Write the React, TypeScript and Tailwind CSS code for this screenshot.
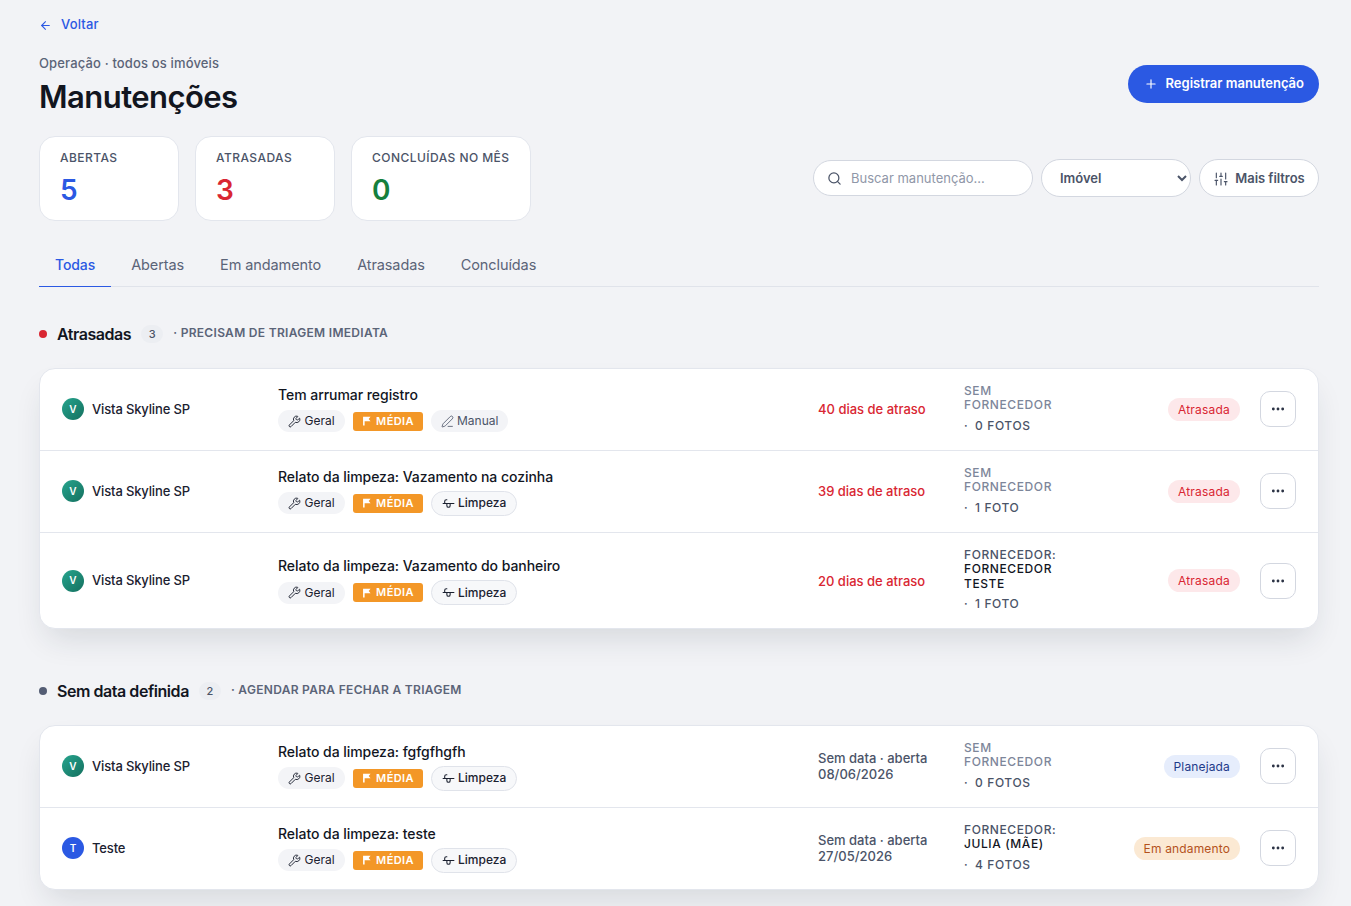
import { ArrowLeft, Ellipsis, PenLine, Plus, Search, SlidersVertical, Wrench } from 'lucide-react';

type Row = {
  initial: string;
  name: string;
  tone: 'green' | 'blue';
  title: string;
  source: 'Manual' | 'Limpeza';
  date: string[];
  late: boolean;
  supplier: string[];
  photos: string;
  status: 'Atrasada' | 'Planejada' | 'Em andamento';
};

const lateRows: Row[] = [
  { initial: 'V', name: 'Vista Skyline SP', tone: 'green', title: 'Tem arrumar registro', source: 'Manual', date: ['40 dias de atraso'], late: true, supplier: [], photos: '0 fotos', status: 'Atrasada' },
  { initial: 'V', name: 'Vista Skyline SP', tone: 'green', title: 'Relato da limpeza: Vazamento na cozinha', source: 'Limpeza', date: ['39 dias de atraso'], late: true, supplier: [], photos: '1 foto', status: 'Atrasada' },
  { initial: 'V', name: 'Vista Skyline SP', tone: 'green', title: 'Relato da limpeza: Vazamento do banheiro', source: 'Limpeza', date: ['20 dias de atraso'], late: true, supplier: ['Fornecedor', 'Teste'], photos: '1 foto', status: 'Atrasada' },
];

const noDateRows: Row[] = [
  { initial: 'V', name: 'Vista Skyline SP', tone: 'green', title: 'Relato da limpeza: fgfgfhgfh', source: 'Limpeza', date: ['Sem data · aberta', '08/06/2026'], late: false, supplier: [], photos: '0 fotos', status: 'Planejada' },
  { initial: 'T', name: 'Teste', tone: 'blue', title: 'Relato da limpeza: teste', source: 'Limpeza', date: ['Sem data · aberta', '27/05/2026'], late: false, supplier: ['Julia (mãe)'], photos: '4 fotos', status: 'Em andamento' },
];

function FlagIcon() {
  return (
    <svg width="9" height="10" viewBox="0 0 14 16" fill="currentColor">
      <path d="M1.5 1h12l-3 3.7 3 3.8H4V15H1.5z" />
    </svg>
  );
}

function CleaningIcon() {
  return (
    <svg width="13" height="13" viewBox="0 0 24 24" fill="none" stroke="currentColor" strokeWidth="2" strokeLinecap="round" strokeLinejoin="round">
      <path d="M2 12h20" />
      <path d="M9 12v4a3 3 0 0 0 6 0v-4" />
      <path d="M5 12V8a3 3 0 0 1 3-3h1" />
    </svg>
  );
}

function Stat({ label, value, color }: { label: string; value: string; color: string }) {
  return (
    <div className="h-[85px] rounded-2xl border border-[#e3e6ed] bg-white px-5 pt-[13px]">
      <p className="whitespace-nowrap text-xs font-medium uppercase leading-4 tracking-[0.45px] text-[#4b5468]">{label}</p>
      <p className={`mt-2 text-[28px] font-semibold leading-8 ${color}`}>{value}</p>
    </div>
  );
}

function StatusPill({ status }: { status: Row['status'] }) {
  if (status === 'Atrasada') {
    return <span className="rounded-full bg-[#fde8ea] px-[10px] py-[3px] text-xs leading-[17px] tracking-[0.2px] text-[#d92632]">Atrasada</span>;
  }
  if (status === 'Planejada') {
    return <span className="rounded-full bg-[#e6edfc] px-[10px] py-[3px] text-xs leading-[17px] tracking-[0.15px] text-[#1e3a8a]">Planejada</span>;
  }
  return <span className="rounded-full bg-[#fbe9d3] px-[10px] py-[3px] text-xs leading-[17px] tracking-[0.15px] text-[#b4521c]">Em andamento</span>;
}

function TableRow({ row }: { row: Row }) {
  return (
    <div className="grid grid-cols-[200px_524px_130px_100px_164px_36px] items-center gap-x-4 border-b border-[#e3e6ed] px-[22px] py-4 last:border-b-0">
      <div className="flex items-center gap-2">
        <span
          className={`flex h-[22px] w-[22px] items-center justify-center rounded-full text-[10px] font-semibold text-white ${
            row.tone === 'green' ? 'bg-gradient-to-br from-[#26a58e] to-[#15705f]' : 'bg-[#2b59e3]'
          }`}
        >
          {row.initial}
        </span>
        <span className="text-[13px] font-medium tracking-[-0.15px] text-[#1b2130]">{row.name}</span>
      </div>
      <div className="pt-px">
        <p className="text-sm font-medium leading-[18px] tracking-[-0.05px] text-[#12161f]">{row.title}</p>
        <div className="mt-[5px] flex h-[25px] items-center gap-2">
          <span className="flex h-[22px] w-[67px] items-center justify-center gap-[3px] rounded-full bg-[#f3f4f7] text-xs text-[#1b2130]">
            <Wrench size={13} strokeWidth={1.75} />
            Geral
          </span>
          <span className="flex h-[19px] w-[70px] items-center justify-center gap-[5px] rounded-[3px] bg-[#f39727] text-[11px] font-semibold tracking-[0.4px] text-white">
            <FlagIcon />
            MÉDIA
          </span>
          {row.source === 'Manual' ? (
            <span className="flex h-[22px] items-center gap-[3px] rounded-full bg-[#f3f4f7] px-[10px] text-xs text-[#4b5468]">
              <PenLine size={13} strokeWidth={1.5} />
              Manual
            </span>
          ) : (
            <span className="flex h-[25px] items-center gap-[3px] rounded-full border border-[#e0e3ea] bg-[#f7f8fa] px-[10px] text-xs font-medium text-[#1b2130]">
              <CleaningIcon />
              Limpeza
            </span>
          )}
        </div>
      </div>
      <div className={`text-[13px] font-medium leading-4 ${row.late ? 'text-[#d92632]' : 'text-[#4b5468]'}`}>
        {row.date.map((line) => (
          <p key={line}>{line}</p>
        ))}
      </div>
      <div className="-mt-px text-xs font-medium uppercase leading-[14.5px] tracking-[0.6px]">
        {row.supplier.length > 0 ? (
          <div>
            <p className="text-[#4b5468]">Fornecedor:</p>
            {row.supplier.map((line) => (
              <p key={line} className="text-[#12161f]">{line}</p>
            ))}
          </div>
        ) : (
          <p className="text-[#7d869a]">Sem fornecedor</p>
        )}
        <p className="mt-[5px] whitespace-nowrap leading-4 text-[#4b5468]">
          <span className="mr-[3px]">·</span> {row.photos}
        </p>
      </div>
      <div className="flex justify-end pr-1">
        <StatusPill status={row.status} />
      </div>
      <button className="flex h-9 w-9 items-center justify-center rounded-[10px] border border-[#d3d7e0] bg-white text-[#2b3244]">
        <Ellipsis size={16} strokeWidth={2.25} />
      </button>
    </div>
  );
}

function Section({ dot, title, count, note, rows }: { dot: string; title: string; count: number; note: string; rows: Row[] }) {
  return (
    <section>
      <div className="flex h-5 items-center">
        <span className={`h-2 w-2 rounded-full ${dot}`} />
        <h2 className="ml-[10px] text-base font-semibold tracking-[-0.45px] text-[#12161f]">{title}</h2>
        <span className="ml-[10px] flex h-[18px] w-[22px] items-center justify-center rounded-full bg-[#eceef2] text-[11px] font-medium text-[#4b5468]">{count}</span>
        <span className="ml-[10px] pb-[2px] text-xs font-semibold uppercase tracking-[0.3px] text-[#5b6478]">· {note}</span>
      </div>
      <div className="mt-6 overflow-hidden rounded-2xl border border-[#e3e6ed] bg-white shadow-[0_16px_32px_-8px_rgba(30,40,60,0.14)]">
        {rows.map((row) => (
          <TableRow key={row.title} row={row} />
        ))}
      </div>
    </section>
  );
}

const tabs = ['Todas', 'Abertas', 'Em andamento', 'Atrasadas', 'Concluídas'];

export default function App() {
  return (
    <main className="min-h-screen bg-[#f2f3f6] pb-4 pl-[39px] pr-8 pt-[17px] font-['Inter',sans-serif]">
      {/* voltar */}
      <a className="flex h-4 items-center gap-[9px] text-[13px] font-medium tracking-[0.15px] text-[#2b59e3]">
        <ArrowLeft size={13} strokeWidth={2} />
        Voltar
      </a>

      {/* cabeçalho */}
      <div className="mt-[22px] flex items-start justify-between">
        <div>
          <p className="text-[13px] font-medium leading-4 tracking-[0.15px] text-[#5b6478]">Operação · todos os imóveis</p>
          <h1 className="mt-[7px] text-[31px] font-semibold leading-[38px] tracking-[-0.55px] text-[#12161f]">Manutenções</h1>
        </div>
        <button className="mt-[10px] flex h-[38px] items-center gap-2 rounded-full bg-[#2b59e3] pl-4 pr-[15px] text-[13px] font-semibold text-white">
          <Plus size={14} strokeWidth={2} />
          Registrar manutenção
        </button>
      </div>

      {/* indicadores e filtros */}
      <div className="mt-5 flex items-center justify-between">
        <div className="flex gap-4">
          <div className="w-[140px]">
            <Stat label="Abertas" value="5" color="text-[#2b59e3]" />
          </div>
          <div className="w-[140px]">
            <Stat label="Atrasadas" value="3" color="text-[#d92632]" />
          </div>
          <div className="w-[180px]">
            <Stat label="Concluídas no mês" value="0" color="text-[#15803d]" />
          </div>
        </div>
        <div className="mb-px flex items-center gap-2">
          <label className="flex h-9 w-[220px] items-center gap-[9px] rounded-full border border-[#d3d7e0] bg-white px-[13px]">
            <Search size={15} strokeWidth={2} className="shrink-0 text-[#4b5468]" />
            <input placeholder="Buscar manutenção..." className="w-full bg-transparent pt-[2px] text-[13px] outline-none placeholder:text-[#9097a8]" />
          </label>
          <select className="h-[38px] w-[150px] rounded-full border border-[#d3d7e0] bg-white pl-[14px] pr-1 text-[13px] font-semibold text-[#4b5468] outline-none" defaultValue="imovel">
            <option value="imovel">Imóvel</option>
          </select>
          <button className="flex h-[38px] w-[120px] items-center justify-center gap-[6px] rounded-full border border-[#d3d7e0] bg-white pt-px text-[13px] font-semibold tracking-[-0.05px] text-[#4b5468]">
            <SlidersVertical size={16} strokeWidth={1.75} />
            Mais filtros
          </button>
        </div>
      </div>

      {/* abas */}
      <nav className="mt-[23px] flex h-[43px] gap-1 border-b border-[#e0e3ea]">
        {tabs.map((tab, i) => (
          <span
            key={tab}
            className={`-mb-px flex items-center px-4 ${
              i === 0 ? 'border-b border-[#2b59e3] pb-0 text-sm font-medium tracking-[-0.1px] text-[#2b59e3]' : 'pb-[2px] text-[14.5px] tracking-[-0.1px] text-[#5b6478]'
            }`}
          >
            {tab}
          </span>
        ))}
      </nav>

      <div className="mt-[36.8px] flex flex-col gap-[51.5px]">
        <Section dot="bg-[#d92632]" title="Atrasadas" count={3} note="Precisam de triagem imediata" rows={lateRows} />
        <Section dot="bg-[#545d74]" title="Sem data definida" count={2} note="Agendar para fechar a triagem" rows={noDateRows} />
      </div>
    </main>
  );
}
